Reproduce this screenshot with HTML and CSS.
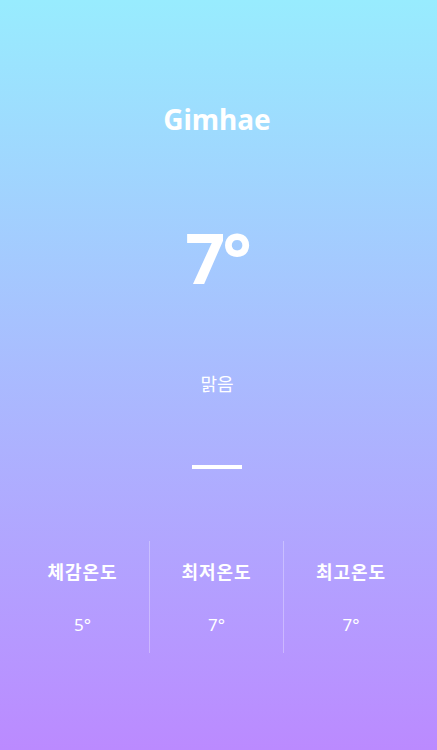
FILE: index.html
```html
<!DOCTYPE html>
<html lang="ko">
<head>
<meta charset="utf-8">
<title>Gimhae</title>
<link rel="stylesheet" href="styles.css">
</head>
<body>
<main class="weather">
  <h1 class="city">Gimhae</h1>
  <div class="temp">7°</div>
  <p class="desc">맑음</p>
  <div class="bar"></div>
  <section class="stats">
    <div class="stat">
      <div class="label">체감온도</div>
      <div class="value">5°</div>
    </div>
    <div class="stat">
      <div class="label">최저온도</div>
      <div class="value">7°</div>
    </div>
    <div class="stat">
      <div class="label">최고온도</div>
      <div class="value">7°</div>
    </div>
  </section>
</main>
</body>
</html>
```

FILE: styles.css
```css
html, body {
  margin: 0;
  padding: 0;
}
body {
  width: 437px;
  height: 750px;
  overflow: hidden;
  background: linear-gradient(180deg, #98ecfe 0%, #bb8aff 100%);
  font-family: "Noto Sans", "Noto Sans CJK KR", sans-serif;
  color: #ffffff;
}
.weather {
  width: 434px;
  display: flex;
  flex-direction: column;
  align-items: center;
}
.city {
  margin: 99px 0 0;
  height: 40px;
  line-height: 40px;
  font-size: 28px;
  font-weight: 700;
}
.temp {
  margin-top: 78px;
  height: 80px;
  line-height: 80px;
  font-size: 70px;
  font-weight: 700;
  letter-spacing: -3px;
}
.desc {
  margin: 72px 0 0;
  height: 28px;
  line-height: 28px;
  font-size: 18px;
  font-family: "Noto Sans CJK KR", sans-serif;
}
.bar {
  margin-top: 68px;
  width: 50px;
  height: 4px;
  background: #ffffff;
}
.stats {
  margin-top: 72px;
  width: 100%;
  box-sizing: border-box;
  padding: 0 16px;
  display: grid;
  grid-template-columns: repeat(3, 1fr);
}
.stat {
  height: 112px;
  display: flex;
  flex-direction: column;
  align-items: center;
  border-right: 1px solid rgba(255, 255, 255, 0.3);
}
.stat:last-child {
  border-right: none;
}
.label {
  margin-top: 17px;
  height: 26px;
  line-height: 26px;
  font-size: 18px;
  letter-spacing: 1px;
  font-weight: 700;
  font-family: "Noto Sans CJK KR", sans-serif;
}
.value {
  margin-top: 28px;
  height: 26px;
  line-height: 26px;
  font-size: 17px;
}
```
